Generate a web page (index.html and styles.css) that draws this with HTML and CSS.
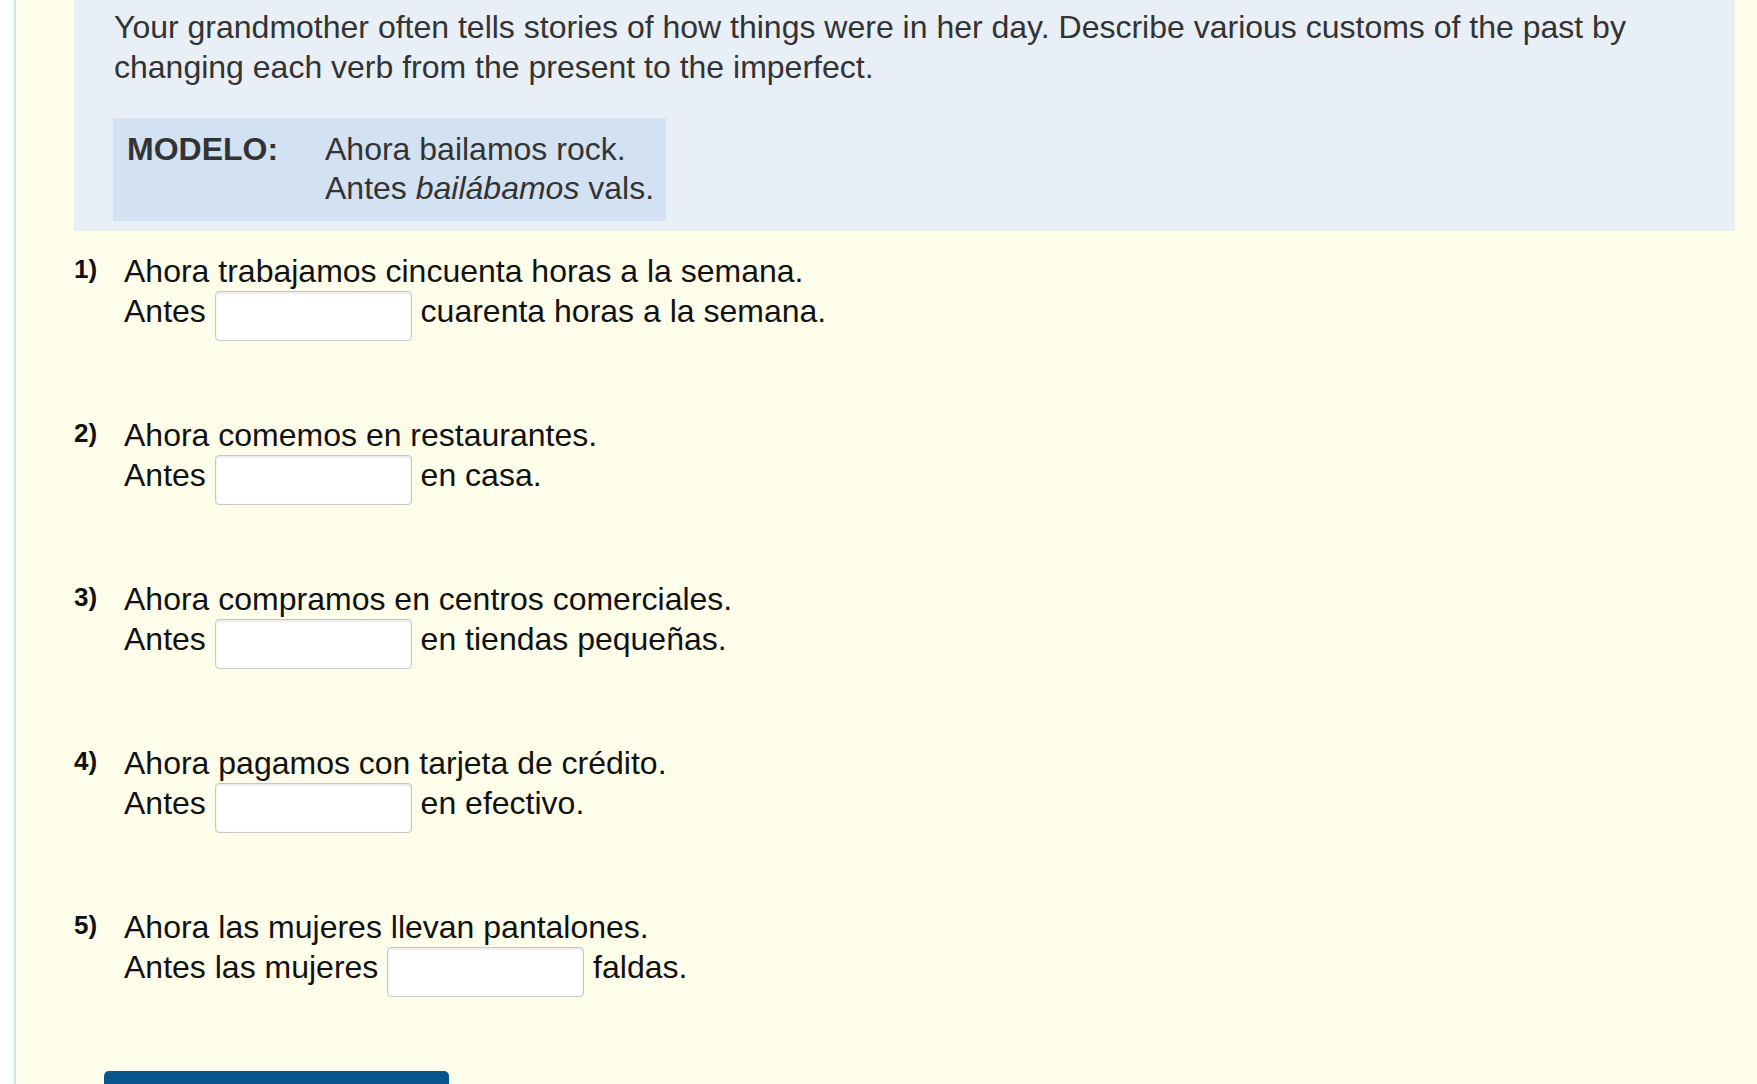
FILE: index.html
```html
<!DOCTYPE html>
<html lang="en">
<head>
    <meta charset="UTF-8">
    <title>Imperfect practice</title>
    <link rel="stylesheet" href="styles.css">
</head>
<body>
    <div class="page">
        <div class="instructions">
            <p class="intro">Your grandmother often tells stories of how things were in her day. Describe various customs of the past by changing each verb from the present to the imperfect.</p>
            <div class="modelo">
                <span class="modelo-label">MODELO:</span>
                <span class="modelo-text">Ahora bailamos rock.<br>Antes <em>bailábamos</em> vals.</span>
            </div>
        </div>

        <ol class="questions">
            <li class="question">
                <span class="num">1)</span>
                <div class="body">
                    <div class="line">Ahora trabajamos cincuenta horas a la semana.</div>
                    <div class="line">Antes <input type="text" class="blank"> cuarenta horas a la semana.</div>
                </div>
            </li>
            <li class="question">
                <span class="num">2)</span>
                <div class="body">
                    <div class="line">Ahora comemos en restaurantes.</div>
                    <div class="line">Antes <input type="text" class="blank"> en casa.</div>
                </div>
            </li>
            <li class="question">
                <span class="num">3)</span>
                <div class="body">
                    <div class="line">Ahora compramos en centros comerciales.</div>
                    <div class="line">Antes <input type="text" class="blank"> en tiendas pequeñas.</div>
                </div>
            </li>
            <li class="question">
                <span class="num">4)</span>
                <div class="body">
                    <div class="line">Ahora pagamos con tarjeta de crédito.</div>
                    <div class="line">Antes <input type="text" class="blank"> en efectivo.</div>
                </div>
            </li>
            <li class="question">
                <span class="num">5)</span>
                <div class="body">
                    <div class="line">Ahora las mujeres llevan pantalones.</div>
                    <div class="line">Antes las mujeres <input type="text" class="blank"> faldas.</div>
                </div>
            </li>
        </ol>

        <button class="submit"></button>
    </div>
</body>
</html>
```

FILE: styles.css
```css
html, body {
    margin: 0;
    padding: 0;
    background: #ffffff;
    height: 100%;
    overflow: hidden;
}

body {
    font-family: "Liberation Sans", Arial, sans-serif;
    font-size: 32px;
    color: #111;
}

.page {
    margin-left: 14px;
    border-left: 2px solid #c7e6ee;
    background: #fefeea;
    padding: 0 22px 0 58px;
    min-height: 100%;
}

.instructions {
    background: #e8eff7;
    padding: 7px 40px 10px 40px;
    color: #333;
}

.intro {
    margin: 0;
    line-height: 40px;
}

.modelo {
    display: flex;
    width: fit-content;
    margin: 31px 0 0 -1px;
    padding: 12px 12px 13px 14px;
    background: #d3e2f3;
    line-height: 39px;
}

.modelo-label {
    font-weight: bold;
    width: 198px;
}

.questions {
    list-style: none;
    margin: 0;
    padding: 20px 0 0 0;
}

.question {
    display: flex;
    margin-bottom: 74px;
}

.num {
    width: 50px;
    font-weight: bold;
    font-size: 26px;
    line-height: 36px;
}

.line {
    line-height: 40px;
}

.blank {
    width: 197px;
    height: 50px;
    box-sizing: border-box;
    border: 1px solid #c9c9c9;
    border-radius: 4px;
    background: #fff;
    box-shadow: inset 0 1px 3px rgba(0, 0, 0, 0.12);
    vertical-align: -3px;
    margin: 0;
    padding: 0 6px;
    font-size: 28px;
}

.submit {
    display: block;
    margin-left: 30px;
    width: 345px;
    height: 50px;
    border: none;
    border-radius: 5px;
    background: #08548f;
}
```
